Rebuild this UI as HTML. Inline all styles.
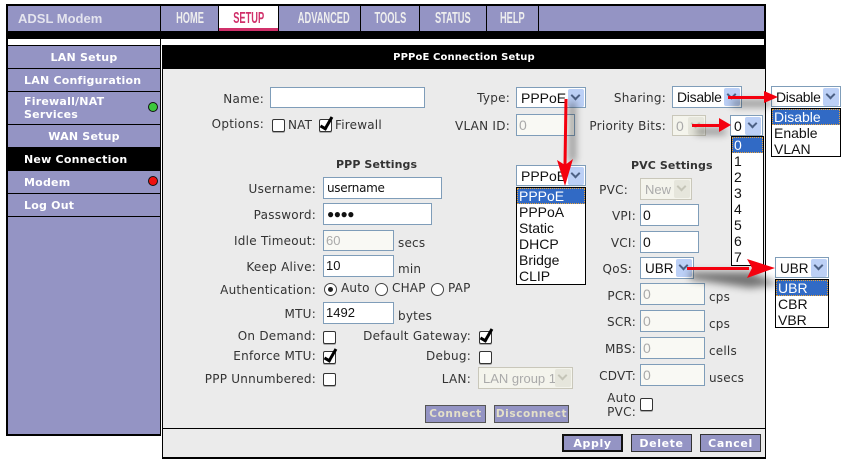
<!DOCTYPE html>
<html><head><meta charset="utf-8"><style>
html,body{margin:0;padding:0;background:#fff}
#p{position:relative;width:844px;height:466px;overflow:hidden;background:#fff;font:12px "DejaVu Sans",sans-serif;color:#333}
#p div,#p span.a{position:absolute;white-space:nowrap;box-sizing:border-box}
.k{background:#000}.u{background:#9494c4}
.n{left:8px;width:152px;color:#fff;font:bold 11px/14px "DejaVu Sans",sans-serif;letter-spacing:.22px;padding-left:16px}
.c{text-align:center;padding-left:0}
.t{top:6px;height:25px;background:#9494c4;color:#eee;font:bold 16px/26px "Liberation Sans",sans-serif;text-align:center;overflow:hidden}
.t b{display:inline-block;transform:scaleX(.58);font-weight:bold}
.l{text-align:right;font-size:12px;line-height:14px;color:#333;letter-spacing:.25px}
.s{font-size:12px;line-height:14px;color:#333;letter-spacing:.2px}
.i{background:#fff;border:1px solid #7f9db9;color:#111;font:14px/20px "Liberation Sans",sans-serif;padding-left:3px}
.d{color:#aaa;background:#f9f9f4;border-color:#7f9db9}
.z{background:#fff;border:1px solid #7f9db9;color:#111;font:14px/21px "Liberation Sans",sans-serif;padding-left:4px}
.g{background:#f4f4ec;border:1px solid #c9c7ba;color:#aaa}
.b{top:1px;right:1px;width:16px;height:18px;background:#bcd0f6;border-radius:2px}
.b:after{content:"";position:absolute;left:4px;top:3px;width:7px;height:7px;border-right:2px solid #4d6185;border-bottom:2px solid #4d6185;transform:rotate(45deg);box-sizing:border-box}
.g .b{background:#e6e6dc}.g .b:after{border-color:#c5c5b8}
.o{background:#fff;border:1px solid #000;color:#111;font:14px/16px "Liberation Sans",sans-serif}
.o span{display:block;padding-left:2px;height:16px}
.o .h{background:#316ac5;color:#fff;outline:1px dotted #e8a33c;outline-offset:-1px}
.x{width:13px;height:13px;background:#fff;border:1px solid #333;border-radius:2px;box-shadow:0 1px 0 #aaa}
.x.y:after{content:"";position:absolute;left:3px;top:-5px;width:7px;height:15px;border-right:3px solid #000;border-bottom:3px solid #000;transform:rotate(30deg);box-sizing:border-box}
.r{width:13px;height:13px;background:#fff;border:1px solid #444;border-radius:50%}
.btn{background:#9494c4;border:1px solid #333;color:#fff;font:bold 11px/17px "DejaVu Sans",sans-serif;text-align:center;letter-spacing:.6px}
.dis{color:#e4e0c8;border-color:#555;height:18px;font-size:10.5px;line-height:17px}
.ph{font:bold 11px/14px "DejaVu Sans",sans-serif;color:#333;letter-spacing:.1px}
.led{width:10px;height:10px;border-radius:50%;border:1px solid #111}
</style></head><body><div id="p">

<div class="k" style="left:6px;top:4px;width:760px;height:36px"></div>
<div class="k" style="left:6px;top:40px;width:155px;height:396px"></div>
<div class="k" style="left:162px;top:40px;width:604px;height:419px"></div>
<div style="left:8px;top:39px;width:152px;height:6px;background:#fff"></div>
<div style="left:161px;top:39px;width:603px;height:6px;background:#fff"></div>

<div class="u" style="left:8px;top:6px;width:152px;height:25px;color:#e4e4ee;font:bold 13px/25px 'Liberation Sans',sans-serif;padding-left:10px">ADSL Modem</div>
<div class="t" style="left:161px;width:57px"><b>HOME</b></div>
<div class="t" style="left:219px;width:59px;background:#fff;color:#d0306a;border-bottom:3px solid #d0306a;line-height:26px"><b>SETUP</b></div>
<div class="t" style="left:279px;width:81px"><b>ADVANCED</b></div>
<div class="t" style="left:361px;width:58px"><b>TOOLS</b></div>
<div class="t" style="left:420px;width:66px"><b>STATUS</b></div>
<div class="t" style="left:487px;width:51px"><b>HELP</b></div>
<div class="u" style="left:539px;top:6px;width:225px;height:25px"></div>

<div class="n u c" style="top:46px;height:22px;line-height:23px">LAN Setup</div>
<div class="n u" style="top:69px;height:22px;line-height:23px">LAN Configuration</div>
<div class="n u" style="top:92px;height:32px;line-height:13px;padding-top:3px;white-space:normal">Firewall/NAT<br>Services</div>
<div class="n u c" style="top:125px;height:22px;line-height:23px">WAN Setup</div>
<div class="n k" style="top:148px;height:23px;line-height:23px">New Connection</div>
<div class="n u" style="top:171px;height:22px;line-height:23px">Modem</div>
<div class="n u" style="top:194px;height:22px;line-height:23px">Log Out</div>
<div class="u" style="left:8px;top:217px;width:152px;height:217px"></div>
<div class="led" style="left:148px;top:102px;background:#3cc83c"></div>
<div class="led" style="left:148px;top:176px;background:#f01010"></div>

<div style="left:163px;top:69px;width:602px;height:359px;background:#ebebeb"></div>
<div style="left:163px;top:429px;width:602px;height:28px;background:#ebebeb"></div>
<div style="left:163px;top:50px;width:602px;color:#fff;text-align:center;font:bold 10px/16px 'DejaVu Sans',sans-serif;letter-spacing:.12px">PPPoE Connection Setup</div>

<div class="l" style="left:200px;width:64px;top:92px">Name:</div>
<div class="l" style="left:190px;width:74px;top:117px">Options:</div>
<div class="i" style="left:270px;top:87px;width:155px;height:21px"></div>
<div class="x" style="left:272px;top:119px"></div><div class="s" style="left:288px;top:118px">NAT</div>
<div class="x y" style="left:319px;top:119px"></div><div class="s" style="left:335px;top:118px">Firewall</div>

<div class="l" style="left:440px;width:70px;top:91px">Type:</div>
<div class="l" style="left:440px;width:70px;top:119px">VLAN ID:</div>
<div class="z" style="left:516px;top:87px;width:70px;height:21px">PPPoE<div class="b"></div></div>
<div class="i d" style="left:516px;top:114px;width:59px;height:22px;padding-left:2px">0</div>

<div class="l" style="left:600px;width:66px;top:91px">Sharing:</div>
<div class="l" style="left:580px;width:86px;top:119px">Priority Bits:</div>
<div class="z" style="left:672px;top:86px;width:70px;height:22px;letter-spacing:-.3px">Disable<div class="b"></div></div>
<div class="z g" style="left:672px;top:115px;width:34px;height:21px;padding-left:3px">0<div class="b"></div></div>

<div class="z" style="left:771px;top:86px;width:70px;height:21px;letter-spacing:-.3px">Disable<div class="b"></div></div>
<div class="o" style="left:771px;top:108px;width:70px;height:49px"><span class="h">Disable</span><span>Enable</span><span>VLAN</span></div>

<div class="z" style="left:730px;top:115px;width:33px;height:21px;padding-left:3px">0<div class="b"></div></div>
<div class="o" style="left:731px;top:136px;width:33px;height:130px"><span class="h">0</span><span>1</span><span>2</span><span>3</span><span>4</span><span>5</span><span>6</span><span>7</span></div>

<div class="ph" style="left:336px;top:158px">PPP Settings</div>
<div class="ph" style="left:631px;top:159px">PVC Settings</div>

<div class="l" style="left:220px;width:96px;top:182px">Username:</div>
<div class="i" style="left:323px;top:177px;width:119px;height:22px;font-family:'DejaVu Sans',sans-serif;font-size:12px;letter-spacing:-.3px">username</div>
<div class="l" style="left:220px;width:96px;top:208px">Password:</div>
<div class="i" style="left:323px;top:203px;width:109px;height:22px;font-size:12px;letter-spacing:-.5px">●●●●</div>
<div class="l" style="left:200px;width:116px;top:234px">Idle Timeout:</div>
<div class="i d" style="left:323px;top:230px;width:71px;height:21px;font-size:13px;padding-left:2px">60</div>
<div class="s" style="left:398px;top:236px">secs</div>
<div class="l" style="left:200px;width:116px;top:260px">Keep Alive:</div>
<div class="i" style="left:323px;top:255px;width:71px;height:22px;font-size:13px;padding-left:2px">10</div>
<div class="s" style="left:398px;top:262px">min</div>
<div class="l" style="left:200px;width:116px;top:283px">Authentication:</div>
<div class="r" style="left:324px;top:283px"></div><div style="left:328px;top:287px;width:5px;height:5px;border-radius:50%;background:#222"></div>
<div class="s" style="left:341px;top:281px">Auto</div>
<div class="r" style="left:375px;top:283px"></div><div class="s" style="left:392px;top:281px">CHAP</div>
<div class="r" style="left:431px;top:283px"></div><div class="s" style="left:448px;top:281px">PAP</div>
<div class="l" style="left:200px;width:116px;top:307px">MTU:</div>
<div class="i" style="left:323px;top:302px;width:71px;height:22px;font-size:13px;padding-left:2px">1492</div>
<div class="s" style="left:398px;top:309px">bytes</div>
<div class="l" style="left:200px;width:116px;top:329px">On Demand:</div>
<div class="x" style="left:323px;top:331px"></div>
<div class="l" style="left:200px;width:116px;top:349px">Enforce MTU:</div>
<div class="x y" style="left:323px;top:351px"></div>
<div class="l" style="left:190px;width:126px;top:372px">PPP Unnumbered:</div>
<div class="x" style="left:323px;top:373px"></div>

<div class="l" style="left:340px;width:131px;top:329px">Default Gateway:</div>
<div class="x y" style="left:479px;top:331px"></div>
<div class="l" style="left:400px;width:71px;top:349px">Debug:</div>
<div class="x" style="left:479px;top:351px"></div>
<div class="l" style="left:420px;width:51px;top:372px">LAN:</div>
<div class="z g" style="left:478px;top:367px;width:95px;height:22px;font-size:13px">LAN group 1<div class="b"></div></div>

<div class="z" style="left:516px;top:165px;width:70px;height:21px">PPPoE<div class="b"></div></div>
<div class="o" style="left:516px;top:187px;width:70px;height:98px"><span class="h">PPPoE</span><span>PPPoA</span><span>Static</span><span>DHCP</span><span>Bridge</span><span>CLIP</span></div>

<div class="l" style="left:590px;width:38px;top:183px">PVC:</div>
<div class="z g" style="left:640px;top:178px;width:52px;height:22px;font-size:13px">New<div class="b"></div></div>
<div class="l" style="left:590px;width:46px;top:209px">VPI:</div>
<div class="i" style="left:640px;top:204px;width:59px;height:22px;font-size:14px;padding-left:2px">0</div>
<div class="l" style="left:590px;width:46px;top:236px">VCI:</div>
<div class="i" style="left:640px;top:231px;width:59px;height:22px;font-size:14px;padding-left:2px">0</div>
<div class="l" style="left:590px;width:42px;top:262px">QoS:</div>
<div class="z" style="left:640px;top:257px;width:54px;height:22px;font-size:13.500px">UBR<div class="b"></div></div>
<div class="l" style="left:590px;width:46px;top:289px">PCR:</div>
<div class="i d" style="left:640px;top:283px;width:65px;height:22px;padding-left:2px">0</div><div class="s" style="left:709px;top:290px">cps</div>
<div class="l" style="left:590px;width:46px;top:315px">SCR:</div>
<div class="i d" style="left:640px;top:310px;width:65px;height:22px;padding-left:2px">0</div><div class="s" style="left:709px;top:317px">cps</div>
<div class="l" style="left:590px;width:46px;top:342px">MBS:</div>
<div class="i d" style="left:640px;top:337px;width:65px;height:22px;padding-left:2px">0</div><div class="s" style="left:709px;top:344px">cells</div>
<div class="l" style="left:590px;width:46px;top:369px">CDVT:</div>
<div class="i d" style="left:640px;top:364px;width:65px;height:22px;padding-left:2px">0</div><div class="s" style="left:709px;top:371px">usecs</div>
<div class="l" style="left:590px;width:46px;top:391px;line-height:14px">Auto<br>PVC:</div>
<div class="x" style="left:640px;top:398px"></div>

<div class="z" style="left:775px;top:257px;width:54px;height:21px;font-size:13.500px">UBR<div class="b"></div></div>
<div class="o" style="left:775px;top:279px;width:54px;height:49px"><span class="h">UBR</span><span>CBR</span><span>VBR</span></div>

<div class="btn dis" style="left:425px;top:405px;width:61px">Connect</div>
<div class="btn dis" style="left:494px;top:405px;width:75px">Disconnect</div>
<div class="btn" style="left:562px;top:434px;width:61px;height:18px;border:2px solid #111;line-height:15px">Apply</div>
<div class="btn" style="left:631px;top:434px;width:61px;height:18px">Delete</div>
<div class="btn" style="left:700px;top:434px;width:61px;height:18px">Cancel</div>
<div class="k" style="left:163px;top:428px;width:602px;height:1px"></div>

<svg style="position:absolute;left:0;top:0" width="844" height="466">
<defs><filter id="f" x="-30%" y="-30%" width="160%" height="160%"><feGaussianBlur stdDeviation="4"/></filter></defs>
<g fill="#000" opacity=".5" filter="url(#f)">
<rect x="732" y="101" width="40" height="5"/><rect x="696" y="129" width="30" height="5"/>
<rect x="570" y="102" width="5" height="60"/><polygon points="690,272 750,272 780,284 750,288 690,279"/>
</g>
<g fill="#f4000e">
<rect x="728" y="96" width="38" height="3"/><polygon points="764,91 778,97 764,103"/>
<rect x="692" y="124" width="30" height="3"/><polygon points="719,118 731,125 719,132"/>
<polygon points="564.500,99 567.500,99 566.500,165 563.500,165"/><polygon points="557,160 565,165 573,159 565,186"/>
<rect x="687" y="267" width="62" height="3"/><polygon points="747,259 775,268 747,278 752,268"/>
</g>
</svg>
</div></body></html>
